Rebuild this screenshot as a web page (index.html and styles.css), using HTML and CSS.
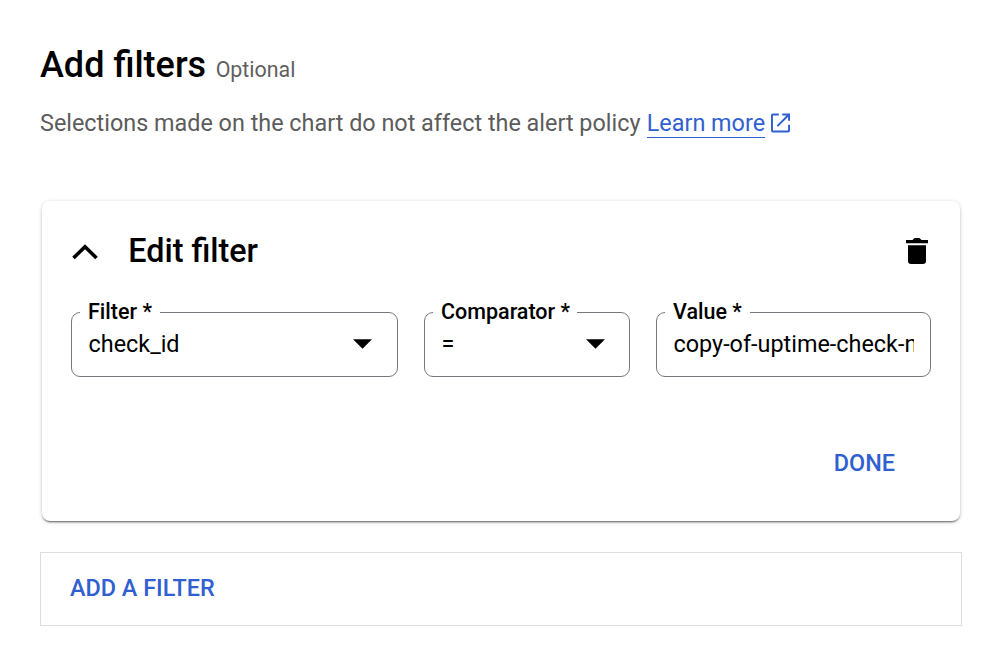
FILE: index.html
```html
<!DOCTYPE html>
<html lang="en">
<head>
<meta charset="utf-8">
<title>Add filters</title>
<link rel="stylesheet" href="styles.css">
</head>
<body>
<main class="page">
  <header class="heading">
    <h1 class="title">Add filters</h1>
    <span class="optional">Optional</span>
  </header>
  <p class="description"><span class="hint">Selections made on the chart do not affect the alert policy</span>
    <a class="link" href="#">Learn more</a>
    <svg class="external" viewBox="0 0 20 20" fill="none" stroke="currentColor" stroke-width="2"><path d="M8 1.500H2a1 1 0 0 0-1 1V18a1 1 0 0 0 1 1h15.500a1 1 0 0 0 1-1v-6M11.500 1.500h7V8M18.500 1.500 6.500 13.500"/></svg>
  </p>
  <section class="card">
    <div class="card-head">
      <svg class="chevron" viewBox="0 0 26 16" fill="none" stroke="#000" stroke-width="3.600"><path d="M1.500 14 13 2.700 24.500 14"/></svg>
      <h2 class="card-title">Edit filter</h2>
      <svg class="trash" viewBox="0 0 22 26"><path d="M0 2h6.500L8.500 0h5l2 2H22v3.300H0zM2 7.200h18V23a3 3 0 0 1-3 3H5a3 3 0 0 1-3-3z"/></svg>
    </div>
    <div class="fields">
      <fieldset class="field filter"><legend><span class="label">Filter *</span></legend>
        <div class="control"><span class="value">check_id</span><span class="arrow"></span></div>
      </fieldset>
      <fieldset class="field comparator"><legend><span class="label">Comparator *</span></legend>
        <div class="control"><span class="value equals">=</span><span class="arrow"></span></div>
      </fieldset>
      <fieldset class="field entry"><legend><span class="label">Value *</span></legend>
        <div class="control"><span class="value">copy-of-uptime-check-n</span></div>
      </fieldset>
    </div>
    <div class="actions"><button class="button">DONE</button></div>
  </section>
  <div class="add-row"><button class="button">ADD A FILTER</button></div>
</main>
</body>
</html>
```
FILE: styles.css
```css
* { box-sizing: border-box; }
body { margin: 0; background: #fff; color: #000; font-family: Roboto, "Liberation Sans", sans-serif; }
.page { padding: 41px 32px 0 40px; }
.heading { display: flex; align-items: baseline; gap: 10px; height: 48px; line-height: 48px; }
.title { margin: 0; font-size: 36px; font-weight: 500; }
.optional { margin-left: -0.5px; font-size: 21.4px; color: #5f5f5f; }
.description { display: flex; align-items: center; height: 30px; margin: 19px 0 0; font-size: 23.38px; line-height: 28px; white-space: nowrap; color: #5c5c5c; }
.link { margin-left: 6.3px; color: #3060d0; text-decoration: none; border-bottom: 1px solid #3060d0; }
.external { width: 19.500px; height: 19.500px; margin-left: 6px; color: #3060d0; }
.card { width: 918px; height: 320px; margin: 63px 0 0 2px; padding: 29px 29px 0 29px; border-radius: 8px; box-shadow: 0 2px 2px -1px rgba(0,0,0,.55), 0 1px 4px rgba(0,0,0,.2); }
.card-head { display: flex; align-items: center; height: 42px; }
.chevron { width: 26px; height: 16px; margin: 2px 0 0 1px; }
.card-title { margin: -1px auto 0 30.3px; font-size: 32.3px; line-height: 42px; font-weight: 500; }
.trash { width: 22px; height: 26px; margin-right: 3px; }
.fields { display: flex; gap: 26px; margin-top: 28px; }
.field { min-width: 0; height: 77px; margin: 0; padding: 0 16px 0 16.5px; border: 1px solid #75797d; border-radius: 9px; }
.field legend { height: 24px; margin-left: -8.5px; padding: 0 8.5px 0 8px; font-size: 21.5px; line-height: 23px; font-weight: 500; white-space: nowrap; }
.filter { width: 327px; }
.comparator { width: 206px; }
.comparator legend { padding-right: 7px; }
.entry { width: 275px; }
.control { display: flex; align-items: center; justify-content: space-between; height: 40px; font-size: 23.4px; overflow: hidden; }
.value { white-space: nowrap; }
.arrow { width: 19px; height: 9.500px; margin-right: 9px; background: #000; clip-path: polygon(0 0, 100% 0, 50% 100%); }
.comparator .arrow { margin-right: 8px; }
.button { padding: 0; border: 0; background: none; color: #3060d0; font: 500 23.4px/30px Roboto, "Liberation Sans", sans-serif; }
.actions { display: flex; justify-content: flex-end; margin-top: 71px; padding-right: 36px; }
.add-row { display: flex; align-items: center; width: 922px; height: 74px; margin-top: 31px; padding: 0 29px 2px; border: 1px solid #ddd; }
```
